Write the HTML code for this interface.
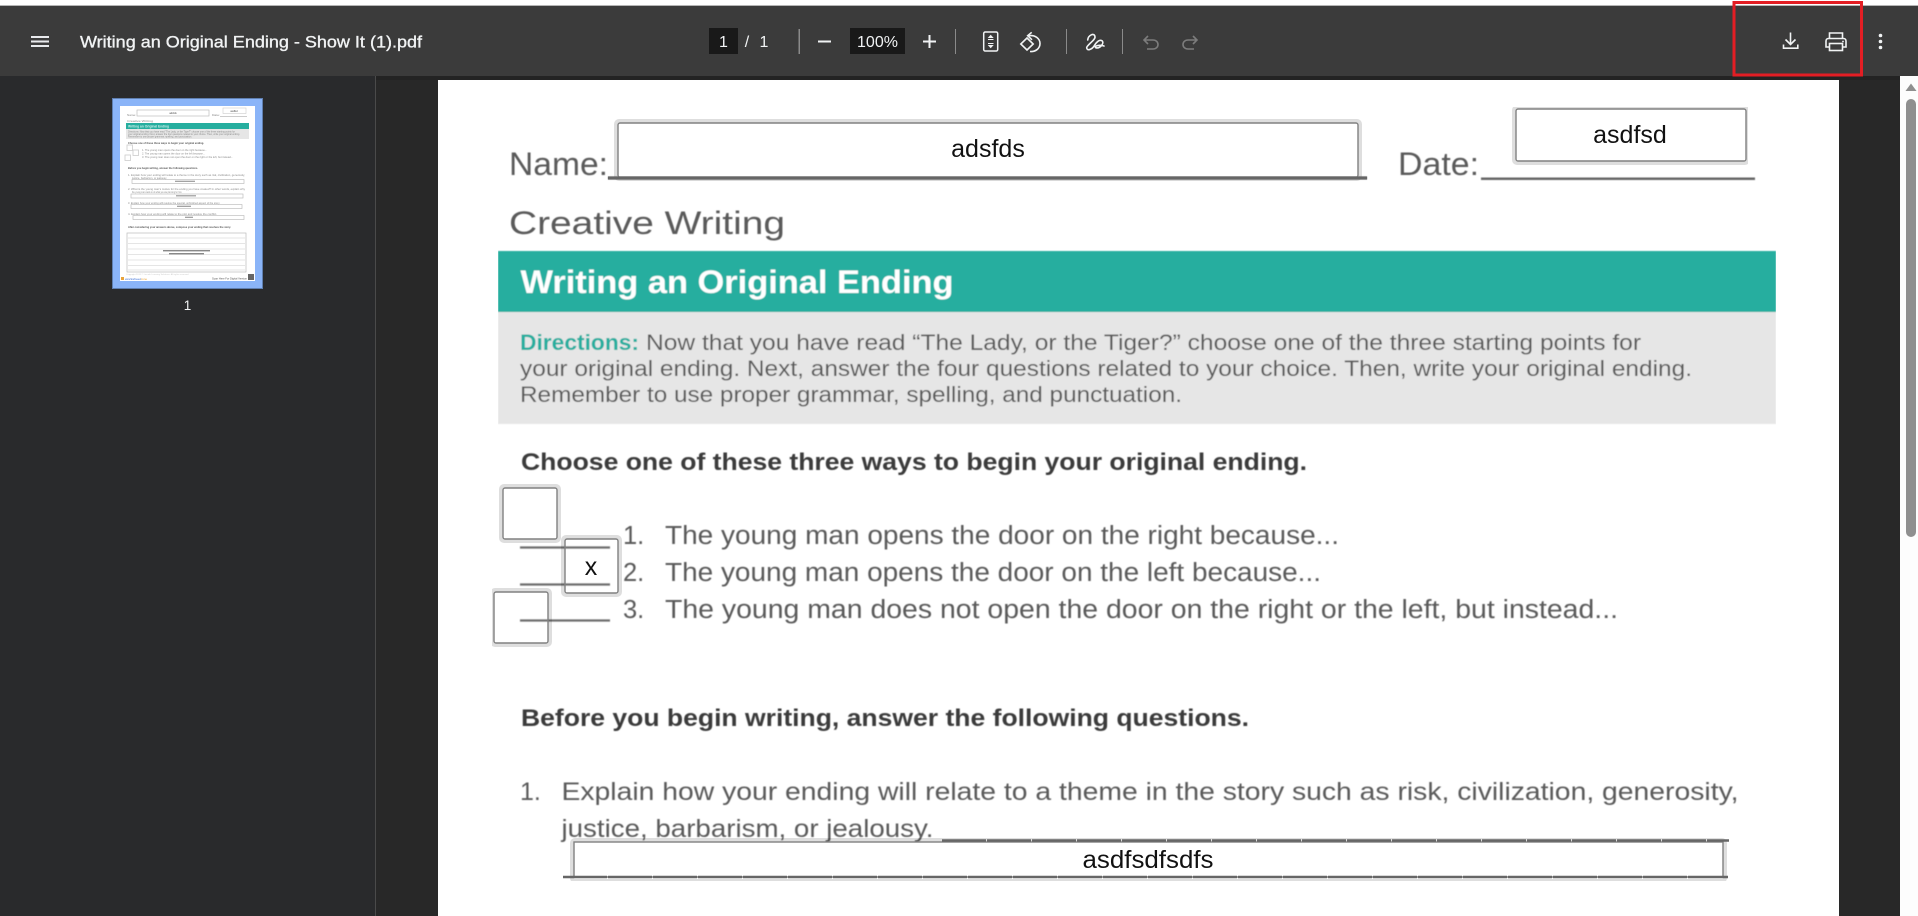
<!DOCTYPE html>
<html><head><meta charset="utf-8"><title>Writing an Original Ending - Show It (1).pdf</title>
<style>
html,body{margin:0;padding:0;background:#282828;width:1918px;height:916px;overflow:hidden}
svg{display:block;position:absolute;left:0;top:0}
text{font-family:"Liberation Sans",sans-serif}
.t{fill:#f1f3f4}
.p{fill:#5a5a5a}
.b{fill:#3a3a3a;font-weight:bold}
.th{fill:#8a8a8a;font-size:3px}
</style></head>
<body>
<svg width="1918" height="916" viewBox="0 0 1918 916" xmlns="http://www.w3.org/2000/svg">
<defs>
<filter id="bl" x="0" y="0" width="100%" height="100%"><feGaussianBlur stdDeviation="0.45"/></filter>
<filter id="bt" x="0" y="0" width="100%" height="100%"><feGaussianBlur stdDeviation="0.25"/></filter>
</defs>
<!-- backgrounds -->
<rect width="1918" height="916" fill="#282828"/>
<rect x="0" y="0" width="1918" height="5" fill="#fff"/>
<rect x="0" y="5" width="1918" height="1" fill="#b5b5b5"/>
<rect x="0" y="6" width="1918" height="70" fill="#3b3b3b"/>
<rect x="0" y="76" width="375" height="840" fill="#292a2c"/>
<rect x="375" y="76" width="1" height="840" fill="#4a4a4a"/>
<rect x="376" y="76" width="1524" height="4" fill="#232323"/>

<!-- thumbnail -->
<rect x="112" y="98" width="151" height="191" fill="#8ab4f8"/>
<rect x="112.500" y="98.500" width="150" height="190" fill="none" stroke="#5f7fb0" stroke-width="1"/>
<g filter="url(#bt)">
<rect x="120" y="106" width="135" height="175" fill="#fff"/>
<text class="th" x="127" y="116" textLength="9" lengthAdjust="spacingAndGlyphs">Name:</text>
<rect x="137" y="110" width="72" height="6" fill="#fff" stroke="#b5b5b5" stroke-width=".6"/>
<text class="th" x="173" y="114" text-anchor="middle" style="font-size:2.500px;fill:#444">adsfds</text>
<text class="th" x="212" y="116" textLength="8" lengthAdjust="spacingAndGlyphs">Date:</text>
<rect x="223" y="108" width="23" height="5.500" fill="#fff" stroke="#ccc" stroke-width=".6"/>
<text class="th" x="234" y="112" text-anchor="middle" style="font-size:2.500px;fill:#444">asdfsd</text>
<rect x="220" y="116" width="27" height=".6" fill="#aaa"/>
<text class="th" x="127" y="122" textLength="26" lengthAdjust="spacingAndGlyphs">Creative Writing</text>
<rect x="126" y="123" width="123" height="6" fill="#25ae9f"/>
<text x="128" y="127.500" textLength="41" lengthAdjust="spacingAndGlyphs" style="font-size:3.200px;fill:#cfeeea;font-weight:bold">Writing an Original Ending</text>
<rect x="126" y="129" width="123" height="10" fill="#e6e6e6"/>
<text class="th" x="128" y="132.500" textLength="107" lengthAdjust="spacingAndGlyphs">Directions: Now that you have read "The Lady, or the Tiger?" choose one of the three starting points for</text>
<text class="th" x="128" y="135" textLength="112" lengthAdjust="spacingAndGlyphs">your original ending. Next, answer the four questions related to your choice. Then, write your original ending.</text>
<text class="th" x="128" y="137.500" textLength="64" lengthAdjust="spacingAndGlyphs">Remember to use proper grammar, spelling, and punctuation.</text>
<text class="th" x="128" y="144" textLength="76" lengthAdjust="spacingAndGlyphs" style="fill:#555;font-weight:bold">Choose one of these three ways to begin your original ending.</text>
<g fill="none" stroke="#ccc" stroke-width=".8"><rect x="127" y="145" width="5.500" height="5.500"/><rect x="133" y="150" width="5.500" height="5.500"/><rect x="125" y="155" width="5.500" height="5.500"/></g>
<text class="th" x="142" y="151" textLength="65" lengthAdjust="spacingAndGlyphs">1. The young man opens the door on the right because...</text>
<text class="th" x="142" y="154.500" textLength="63" lengthAdjust="spacingAndGlyphs">2. The young man opens the door on the left because...</text>
<text class="th" x="142" y="158" textLength="91" lengthAdjust="spacingAndGlyphs">3. The young man does not open the door on the right or the left, but instead...</text>
<text class="th" x="128" y="169" textLength="70" lengthAdjust="spacingAndGlyphs" style="fill:#555;font-weight:bold">Before you begin writing, answer the following questions.</text>
<text class="th" x="128" y="176" textLength="117" lengthAdjust="spacingAndGlyphs">1. Explain how your ending will relate to a theme in the story such as risk, civilization, generosity,</text>
<text class="th" x="132" y="179" textLength="35" lengthAdjust="spacingAndGlyphs">justice, barbarism, or jealousy.</text>
<rect x="132" y="179.500" width="112" height="4" fill="#fff" stroke="#b5b5b5" stroke-width=".6"/>
<rect x="175" y="180.700" width="20" height="1.200" fill="#999"/>
<text class="th" x="128" y="190" textLength="117" lengthAdjust="spacingAndGlyphs">2. What is the young man's motive for the ending you have created? In other words, explain why</text>
<text class="th" x="132" y="193" textLength="50" lengthAdjust="spacingAndGlyphs">the young man wants to do what you are planning for him.</text>
<rect x="131" y="194" width="112" height="4" fill="#fff" stroke="#b5b5b5" stroke-width=".6"/>
<rect x="176" y="195.200" width="20" height="1.200" fill="#999"/>
<text class="th" x="128" y="204" textLength="92" lengthAdjust="spacingAndGlyphs">3. Explain how your ending will resolve the special, unfinished aspect of the story.</text>
<rect x="131" y="204.500" width="111" height="4" fill="#fff" stroke="#b5b5b5" stroke-width=".6"/>
<rect x="177" y="205.700" width="14" height="1.200" fill="#999"/>
<text class="th" x="128" y="215" textLength="89" lengthAdjust="spacingAndGlyphs">4. Explain how your ending will relate to the plot and resolve the conflict.</text>
<rect x="133" y="215.500" width="111" height="4" fill="#fff" stroke="#b5b5b5" stroke-width=".6"/>
<rect x="185" y="216.700" width="8" height="1.200" fill="#999"/>
<text class="th" x="128" y="228" textLength="103" lengthAdjust="spacingAndGlyphs" style="fill:#555;font-weight:bold">After considering your answers above, compose your ending that resolves the story.</text>
<rect x="127" y="233" width="119" height="39" fill="#fff" stroke="#bbb" stroke-width=".7"/>
<g stroke="#ccc" stroke-width=".6"><path d="M128 238H245M128 243.500H245M128 249H245M128 254.500H245M128 260H245M128 265.500H245M128 270H245"/></g>
<rect x="163" y="250" width="47" height="1.400" fill="#888"/>
<rect x="169" y="253" width="35" height="1.400" fill="#888"/>
<text class="th" x="126" y="275" textLength="63" lengthAdjust="spacingAndGlyphs" style="fill:#ccc;font-size:2px">Copyright 2015 © Lincoln Learning Solutions. All rights reserved.</text>
<rect x="121" y="277" width="3" height="3" fill="#e8a33a"/>
<text x="125" y="280" textLength="16" lengthAdjust="spacingAndGlyphs" style="font-size:3px;fill:#3b6fd6">worksheet</text>
<text x="141" y="280" textLength="6" lengthAdjust="spacingAndGlyphs" style="font-size:3px;fill:#e8a33a">zone</text>
<text class="th" x="212" y="279.500" textLength="35" lengthAdjust="spacingAndGlyphs" style="fill:#555">Scan Here For Digital Version</text>
<rect x="248" y="274" width="6" height="6" fill="#666"/>
</g>
<text x="187.500" y="310" text-anchor="middle" class="t" style="font-size:13.500px">1</text>

<!-- pdf page -->
<rect x="438" y="80" width="1401" height="836" fill="#fff"/>
<g filter="url(#bl)">
<text class="p" x="509" y="175" style="font-size:32px" textLength="99" lengthAdjust="spacingAndGlyphs">Name:</text>
<text class="p" x="1398" y="175" style="font-size:32px" textLength="81" lengthAdjust="spacingAndGlyphs">Date:</text>
<rect x="608" y="176.500" width="759" height="3" fill="#666"/>
<rect x="1481" y="177.500" width="274" height="2.500" fill="#666"/>
<text class="p" x="509" y="234" style="font-size:32px" textLength="276" lengthAdjust="spacingAndGlyphs">Creative Writing</text>
<rect x="498" y="251" width="1278" height="61" fill="#25ae9f"/>
<text x="520.500" y="293" textLength="433" lengthAdjust="spacingAndGlyphs" style="font-size:32px;font-weight:bold;fill:#fff">Writing an Original Ending</text>
<rect x="498" y="312" width="1278" height="112" fill="#e6e6e6"/>
<text x="520" y="350" textLength="119" lengthAdjust="spacingAndGlyphs" style="font-size:22px;font-weight:bold;fill:#25ae9f">Directions:</text>
<text class="p" x="646" y="350" style="font-size:22px" textLength="995" lengthAdjust="spacingAndGlyphs">Now that you have read “The Lady, or the Tiger?” choose one of the three starting points for</text>
<text class="p" x="520" y="376" style="font-size:22px" textLength="1172" lengthAdjust="spacingAndGlyphs">your original ending. Next, answer the four questions related to your choice. Then, write your original ending.</text>
<text class="p" x="520" y="402" style="font-size:22px" textLength="662" lengthAdjust="spacingAndGlyphs">Remember to use proper grammar, spelling, and punctuation.</text>

<text class="b" x="521" y="470" style="font-size:24px" textLength="786" lengthAdjust="spacingAndGlyphs">Choose one of these three ways to begin your original ending.</text>
<path d="M520 547.500H610M520 584.500H610M520 620.500H610" stroke="#6e6e6e" stroke-width="2.200" fill="none"/>
<text class="p" x="623" y="544" style="font-size:25.500px">1.</text>
<text class="p" x="623" y="581" style="font-size:25.500px">2.</text>
<text class="p" x="623" y="618" style="font-size:25.500px">3.</text>
<text class="p" x="665" y="544" style="font-size:25.500px" textLength="674" lengthAdjust="spacingAndGlyphs">The young man opens the door on the right because...</text>
<text class="p" x="665" y="581" style="font-size:25.500px" textLength="656" lengthAdjust="spacingAndGlyphs">The young man opens the door on the left because...</text>
<text class="p" x="665" y="618" style="font-size:25.500px" textLength="953" lengthAdjust="spacingAndGlyphs">The young man does not open the door on the right or the left, but instead...</text>

<text class="b" x="521" y="726" style="font-size:24px" textLength="728" lengthAdjust="spacingAndGlyphs">Before you begin writing, answer the following questions.</text>
<text class="p" x="520" y="800" style="font-size:25px">1.</text>
<text class="p" x="561.500" y="800" style="font-size:25px" textLength="1177" lengthAdjust="spacingAndGlyphs">Explain how your ending will relate to a theme in the story such as risk, civilization, generosity,</text>
<text class="p" x="561.500" y="837" style="font-size:25px" textLength="372" lengthAdjust="spacingAndGlyphs">justice, barbarism, or jealousy.</text>
</g>

<!-- form fields -->
<g filter="url(#bt)">
<g fill="none" stroke="#000" stroke-opacity=".13" stroke-width="4">
<rect x="616" y="121" width="744" height="58" rx="3"/>
<rect x="1514" y="107" width="234" height="56" rx="3"/>
<rect x="501" y="486" width="58" height="55" rx="3"/>
<rect x="563" y="537" width="57" height="58" rx="3"/>
<rect x="492" y="590" width="58" height="55" rx="3"/>
<rect x="572" y="840" width="1153" height="41" rx="3"/>
</g>
<rect x="618" y="123" width="740" height="54" rx="2" fill="#fff" stroke="#808080" stroke-width="1.400"/>
<rect x="608" y="176.500" width="759" height="3" fill="#666"/>
<rect x="1516" y="109" width="230" height="52" rx="2" fill="#fff" stroke="#808080" stroke-width="1.400"/>
<rect x="503" y="488" width="54" height="51" rx="2" fill="#fff" stroke="#808080" stroke-width="1.400"/>
<rect x="565" y="539" width="53" height="54" rx="2" fill="none" stroke="#808080" stroke-width="1.400"/>
<rect x="494" y="592" width="54" height="51" rx="2" fill="none" stroke="#808080" stroke-width="1.400"/>
<rect x="574" y="842" width="1149" height="35" fill="#fff" stroke="#808080" stroke-width="1.400"/>
<path d="M942 840.500H1729" stroke="#666" stroke-width="2.500" stroke-dasharray="44 1"/>
<path d="M563 877H1728" stroke="#666" stroke-width="2.500" stroke-dasharray="44 1"/>
</g>
<g style="font-size:25px" fill="#111">
<text x="988" y="157" text-anchor="middle">adsfds</text>
<text x="1630" y="143" text-anchor="middle">asdfsd</text>
<text x="591" y="575" text-anchor="middle">x</text>
<text x="1148" y="868" text-anchor="middle" textLength="131" lengthAdjust="spacingAndGlyphs">asdfsdfsdfs</text>
</g>

<!-- scrollbar -->
<rect x="1900" y="76" width="18" height="840" fill="#fdfdfd"/>
<path d="M1905.500 91L1911 83.500L1916.500 91Z" fill="#8f8f8f"/>
<rect x="1906" y="99" width="10" height="438" rx="5" fill="#8f8f8f"/>

<!-- toolbar -->
<g fill="none" stroke="#f1f3f4" stroke-width="2">
<path d="M31 37H49M31 41.500H49M31 46H49" stroke="#e8eaed"/>
</g>
<text x="80" y="47.500" class="t" style="font-size:17px;stroke:#f1f3f4;stroke-width:.35px" textLength="342" lengthAdjust="spacingAndGlyphs">Writing an Original Ending - Show It (1).pdf</text>

<rect x="709" y="28" width="29" height="26" fill="#191919"/>
<text x="723.500" y="47" text-anchor="middle" class="t" style="font-size:16px">1</text>
<text x="747" y="47" text-anchor="middle" class="t" style="font-size:16px">/</text>
<text x="764" y="47" text-anchor="middle" class="t" style="font-size:16px">1</text>
<rect x="798.500" y="29" width="1.500" height="25" fill="#8a8a8a"/>
<path d="M818 41.500H831" stroke="#f1f3f4" stroke-width="2"/>
<rect x="850" y="28" width="55" height="26" fill="#191919"/>
<text x="877.500" y="47" text-anchor="middle" class="t" style="font-size:16px">100%</text>
<path d="M923 41.500H936M929.500 35V48" stroke="#f1f3f4" stroke-width="2" fill="none"/>
<rect x="955" y="29" width="1" height="25" fill="#8a8a8a"/>
<!-- fit -->
<rect x="983.700" y="32" width="14" height="19" rx="1.500" fill="none" stroke="#f1f3f4" stroke-width="1.500"/>
<path d="M987.700 38L990.700 34.800L993.700 38ZM987.700 45L990.700 48.200L993.700 45Z" fill="#f1f3f4"/>
<path d="M988 39.500H993.500M988 43.500H993.500" stroke="#f1f3f4" stroke-width="1" fill="none"/>
<!-- rotate -->
<g fill="none" stroke="#f1f3f4" stroke-width="1.600">
<path d="M1027 38L1033.200 44L1027 50L1020.800 44Z"/>
<path d="M1029 35.700C1035 34.700 1040 38.500 1040 43.500C1040 48.500 1035.500 52 1030 51.500"/>
<path d="M1031.700 32.300L1027.700 35.700L1032 39.800"/>
</g>
<rect x="1066" y="29" width="1" height="25" fill="#8a8a8a"/>
<!-- draw -->
<path d="M1087.700 40C1088.300 35 1094.300 32.300 1095 36.700C1095.700 40 1086.700 45 1086.700 47.700C1086.700 51 1091.700 50 1094.300 45.700C1096.700 41.700 1100 39 1102.300 41C1104.300 43.300 1100 49 1095.700 47.700C1094 46 1099 44.500 1104 46" fill="none" stroke="#f1f3f4" stroke-width="1.600" stroke-linecap="round" stroke-linejoin="round"/>
<rect x="1122" y="29" width="1" height="25" fill="#8a8a8a"/>
<!-- undo / redo -->
<g fill="none" stroke="#7c7c7c" stroke-width="1.600">
<path d="M1148 36L1144 40L1148 44M1144 40H1153C1156 40 1158 42 1158 44.500C1158 47 1156 49 1153 49H1147"/>
<path d="M1193 36L1197 40L1193 44M1197 40H1188C1185 40 1183 42 1183 44.500C1183 47 1185 49 1188 49H1194"/>
</g>
<!-- download -->
<g fill="none" stroke="#f1f3f4" stroke-width="1.600">
<path d="M1790.500 32.500V44"/>
<path d="M1785.500 39.500L1790.500 44.500L1795.500 39.500"/>
<path d="M1783.500 44.500V48.200H1797.800V44.500"/>
</g>
<!-- print -->
<g fill="none" stroke="#f1f3f4" stroke-width="1.600">
<path d="M1829.500 38.500V33H1842.500V38.500"/>
<path d="M1829 47H1826V41C1826 39.500 1827 38.500 1828.500 38.500H1843.500C1845 38.500 1846 39.500 1846 41V47H1843"/>
<rect x="1829.500" y="43.500" width="13" height="7"/>
</g>
<circle cx="1843" cy="41.500" r=".9" fill="#f1f3f4"/>
<g fill="#f1f3f4"><circle cx="1880.500" cy="35.500" r="1.800"/><circle cx="1880.500" cy="41.500" r="1.800"/><circle cx="1880.500" cy="47.500" r="1.800"/></g>

<!-- annotation -->
<rect x="1734" y="2.500" width="127.500" height="72.500" fill="none" stroke="#e31e24" stroke-width="3"/>
</svg>
</body></html>
